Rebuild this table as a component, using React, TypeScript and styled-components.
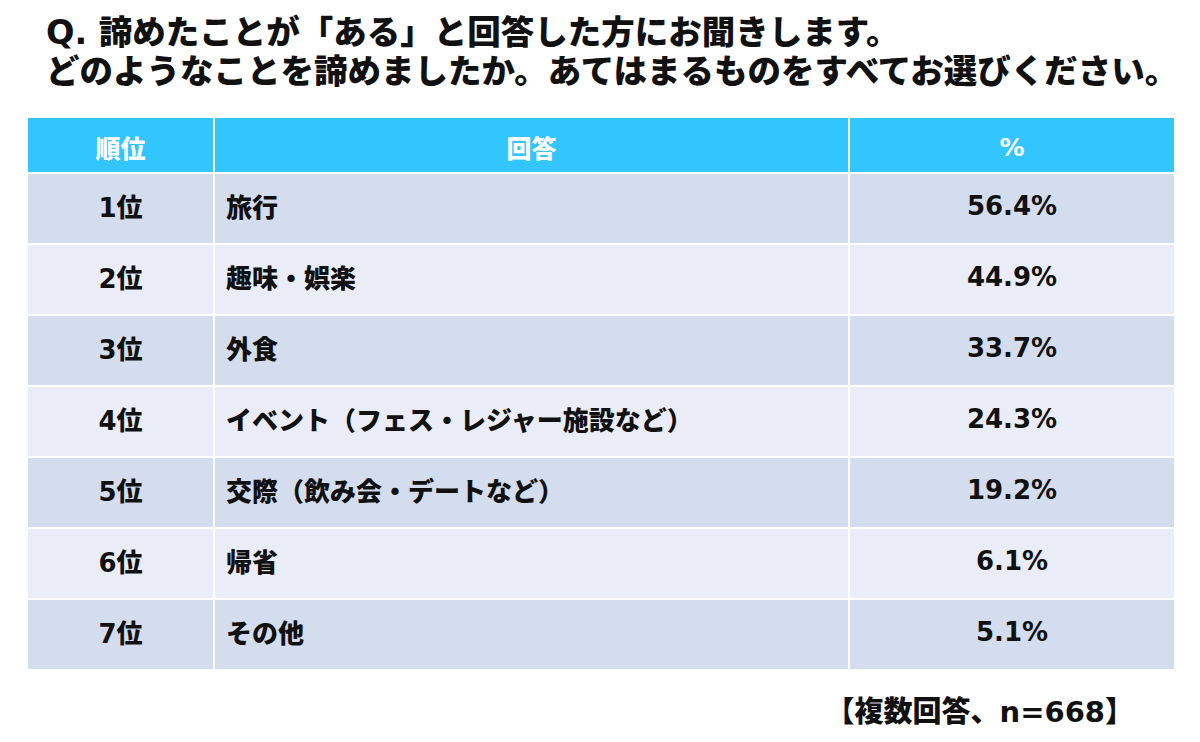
import React from "react";
import styled, { createGlobalStyle } from "styled-components";

const GlobalStyle = createGlobalStyle`
  html, body {
    margin: 0;
    padding: 0;
    background: #ffffff;
  }
  body {
    font-family: "DejaVu Sans", "Noto Sans CJK JP", sans-serif;
    color: #111111;
  }
`;

const Page = styled.div`
  width: 1200px;
  height: 742px;
  box-sizing: border-box;
  padding-top: 13px;
  display: flex;
  flex-direction: column;
  overflow: hidden;
`;

const Title = styled.h1`
  margin: 0 0 27px 46px;
  font-family: "DejaVu Sans", "Noto Sans CJK JP", sans-serif;
  font-weight: 900;
  font-size: 33.5px;
  line-height: 39px;
  color: #111111;
  white-space: nowrap;
`;

const Table = styled.div`
  margin-left: 28px;
  width: 1146px;
  display: grid;
  grid-template-columns: 185px 633px 324px;
  grid-auto-rows: 69px;
  grid-template-rows: 54px;
  gap: 2px;
  background: #ffffff;
`;

const HeadCell = styled.div`
  background: #33c5fe;
  color: #ffffff;
  font-weight: 900;
  font-size: 25px;
  display: flex;
  align-items: center;
  justify-content: center;
  padding-top: 4px;
  box-sizing: border-box;
`;

const Cell = styled.div<{ $alt: boolean; $align: "center" | "left" }>`
  background: ${(p) => (p.$alt ? "#eaedf8" : "#d4ddee")};
  font-weight: 900;
  font-size: 26px;
  color: #111111;
  display: flex;
  align-items: center;
  justify-content: ${(p) => (p.$align === "center" ? "center" : "flex-start")};
  padding-left: ${(p) => (p.$align === "left" ? "11px" : "0")};
  padding-bottom: 6px;
  box-sizing: border-box;
  white-space: nowrap;
`;

const Footer = styled.div`
  display: flex;
  justify-content: flex-end;
  padding-right: 66px;
  margin-top: 23px;
  font-weight: 900;
  font-size: 29px;
  line-height: 40px;
  color: #111111;
`;

const rows = [
  { rank: "1位", answer: "旅行", pct: "56.4%" },
  { rank: "2位", answer: "趣味・娯楽", pct: "44.9%" },
  { rank: "3位", answer: "外食", pct: "33.7%" },
  { rank: "4位", answer: "イベント（フェス・レジャー施設など）", pct: "24.3%" },
  { rank: "5位", answer: "交際（飲み会・デートなど）", pct: "19.2%" },
  { rank: "6位", answer: "帰省", pct: "6.1%" },
  { rank: "7位", answer: "その他", pct: "5.1%" },
];

export default function App() {
  return (
    <>
      <GlobalStyle />
      <Page>
        <Title>
          Q. 諦めたことが「ある」と回答した方にお聞きします。
          <br />
          どのようなことを諦めましたか。あてはまるものをすべてお選びください。
        </Title>
        <Table>
          <HeadCell>順位</HeadCell>
          <HeadCell>回答</HeadCell>
          <HeadCell>%</HeadCell>
          {rows.map((r, i) => (
            <React.Fragment key={r.rank}>
              <Cell $alt={i % 2 === 1} $align="center">{r.rank}</Cell>
              <Cell $alt={i % 2 === 1} $align="left">{r.answer}</Cell>
              <Cell $alt={i % 2 === 1} $align="center">{r.pct}</Cell>
            </React.Fragment>
          ))}
        </Table>
        <Footer>【複数回答、n=668】</Footer>
      </Page>
    </>
  );
}
